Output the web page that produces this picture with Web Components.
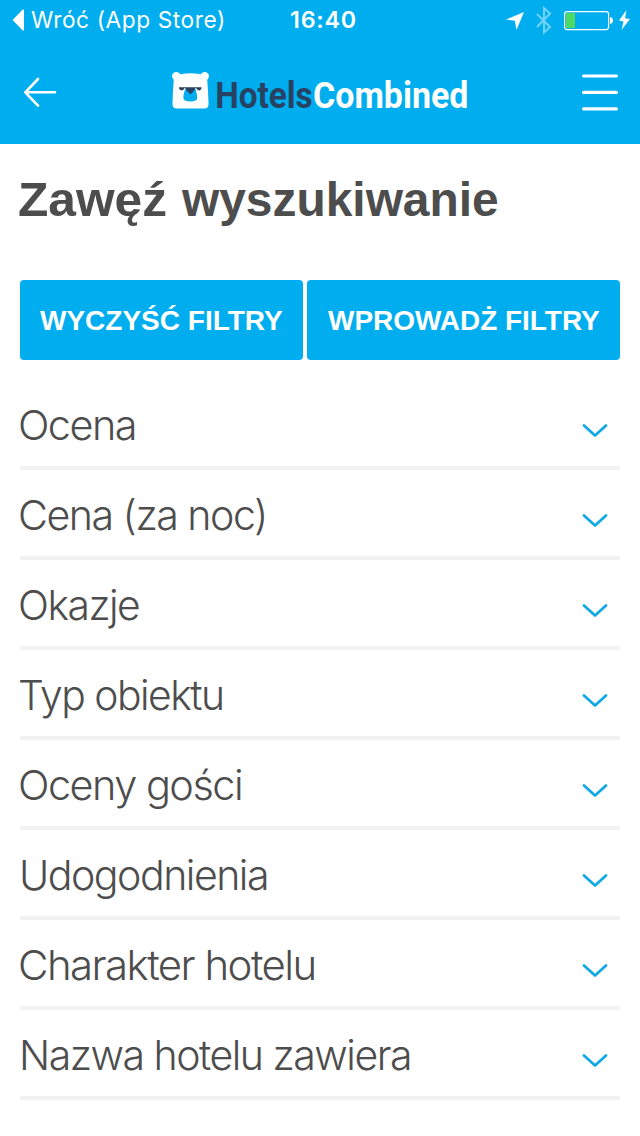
<!DOCTYPE html>
<html lang="pl">
<head>
<meta charset="utf-8">
<title>HotelsCombined</title>
<style>
body{margin:0;background:#fff;font-family:"Liberation Sans",Arial,sans-serif;color:#4d4d4d;font-optical-sizing:none}
</style>
</head>
<body>
<hotel-app></hotel-app>
<script>
const define = (name, html, setup) => customElements.define(name, class extends HTMLElement {
  connectedCallback() {
    if (this.shadowRoot) return;
    this.attachShadow({mode: 'open'}).innerHTML = html;
    if (setup) setup(this, this.shadowRoot);
  }
});
const ctx = document.createElement('canvas').getContext('2d');

// A single-line label whose glyphs span exactly the given width.
define('fit-text', `<style>
  :host{display:block;white-space:nowrap;flex:none}
  span{display:inline-block;transform-origin:0 50%}
</style><span><slot></slot></span>`, (el, root) => {
  const target = +el.getAttribute('w');
  const cs = getComputedStyle(el);
  ctx.font = `${cs.fontWeight} ${cs.fontSize} ${cs.fontFamily}`;
  ctx.letterSpacing = cs.letterSpacing === 'normal' ? '0px' : cs.letterSpacing;
  const m = ctx.measureText(el.textContent);
  const span = root.querySelector('span');
  const ratio = span.getBoundingClientRect().width / m.width;
  const k = target / ((m.actualBoundingBoxLeft + m.actualBoundingBoxRight) * ratio);
  el.style.width = target + 'px';
  span.style.transform = `translateX(${m.actualBoundingBoxLeft * k}px) scaleX(${k})`;
});

define('status-bar', `<style>
  :host{display:grid;grid-template-columns:290px 1fr auto;align-items:center;height:40px;padding:0 9px 0 12px;box-sizing:border-box;color:#fff;font-family:Inter,sans-serif;font-size:23px;line-height:40px}
  .back{display:flex;align-items:center;gap:7px;letter-spacing:.6px}
  .time{font-weight:600;margin-left:-11px;letter-spacing:.8px}
  svg{display:block}
</style>
<div class="back"><svg width="12" height="22" viewBox="0 0 12 22"><path d="M.5 11 10.500 .8Q12 0 12 1.500V20.500Q12 22 10.500 21.200Z" fill="#fff"/></svg><fit-text w="192">Wróć (App Store)</fit-text></div>
<fit-text class="time" w="65">16:40</fit-text>
<svg width="126" height="40" viewBox="505 0 126 40">
  <path d="M524 12 516.500 30 514.800 20.800 506 19.500Z" fill="#fff"/>
  <path d="M537 14 550 27 544 32.500V8L550 13.500 537 27" fill="none" stroke="#71d3fa" stroke-width="2"/>
  <rect x="564.600" y="11.600" width="44" height="18" rx="2.500" fill="none" stroke="#fff" stroke-width="1.200"/>
  <path d="M566 13h9v15h-9z" fill="#4cd964"/>
  <path d="M610 17q3 .6 3 3.500t-3 3.500z" fill="#fff"/>
  <path d="M626.500 10 619 20.500 623.500 21.400 621.500 30 630 18.900 625 18.300Z" fill="#fff"/>
</svg>`);

define('bear-logo', `<style>
  :host{display:flex;align-items:flex-start;font:700 36.5px/42px Roboto,sans-serif;color:#fff}
  svg{display:block;flex:none;margin:1px 8px 0 0}
  fit-text{margin-top:4px}
  .h{color:#274263;margin-right:2px}
</style>
<svg width="37" height="38" viewBox="0 0 37 38">
  <circle cx="4.300" cy="4.300" r="4.200" fill="#fff"/><circle cx="32.700" cy="4.300" r="4.200" fill="#fff"/>
  <path d="M4.500 3Q18.500-.5 32.500 3Q35 5 35.300 9 36.300 20 36.500 32 36.600 36.400 32.300 36.400H4.700Q.4 36.400.5 32 .7 20 1.700 9 2 5 4.500 3Z" fill="#fff"/>
  <path d="M13.300 17Q11 23 11.500 27Q12.500 29.400 18.500 29.400T25 27Q25.500 23 23.500 17Z" fill="#00aeef"/>
  <path d="M7 15.200H29.500V16.200Q29 18.500 27 18.500 25 18.300 24.300 16.300H23.200Q23 18.500 18.500 22.300 13.800 18.500 13.500 16.300H12.300Q11.500 18.500 9.700 18.500 7.500 18.300 7 16.200Z" fill="#274263"/>
</svg>
<fit-text class="h" w="95">Hotels</fit-text><fit-text w="153">Combined</fit-text>`);

define('nav-bar', `<style>
  :host{display:flex;align-items:flex-start;height:104px;padding:31px 22px 0 23px;box-sizing:border-box}
  .arrow{margin:6px 115px 0 0}
  .menu{margin:2px 0 0 auto}
  svg{display:block;flex:none}
  path{fill:none;stroke:#fff;stroke-linecap:round;stroke-linejoin:round}
</style>
<svg class="arrow" width="34" height="31" viewBox="0 0 34 31"><path d="M15 2 2.300 15.300 15 28.700M2.300 15.300H32" stroke-width="2.600"/></svg>
<bear-logo></bear-logo>
<svg class="menu" width="36" height="40" viewBox="0 0 36 40"><path d="M1.600 3H34.400M1.600 19.400H34.400M1.600 35.800H34.400" stroke-width="3.200"/></svg>`);

define('action-button', `<style>
  :host{display:flex;align-items:center;justify-content:center;background:#00aeef;color:#fff;border-radius:4px;height:80px;font-size:28px;font-weight:700;line-height:78px;padding-top:2px;box-sizing:border-box}
</style><slot></slot>`);

define('filter-row', `<style>
  :host{display:flex;align-items:center;justify-content:space-between;height:90px;box-sizing:border-box;padding-top:4px;border-bottom:4px solid #f2f2f2;font:300 41px/60px Inter,sans-serif;font-optical-sizing:none;letter-spacing:-1.5px;color:#4d4d4d}
  :host([stem]){padding-left:2px}
  svg{display:block;margin:11px 12px 0 0}
</style><slot></slot>
<svg width="26" height="16" viewBox="0 0 26 16"><path d="M2 2.500 13 12.500 24 2.500" fill="none" stroke="#10a9e6" stroke-width="2.800" stroke-linecap="round" stroke-linejoin="round"/></svg>`);

define('hotel-app', `<style>
  :host{display:block;height:1136px;overflow:hidden;background:#fff}
  header{background:#00aeef}
  main{padding:0 20px}
  h1{display:flex;gap:15px;margin:0 0 0 -1px;padding-top:26px;height:110px;font-size:48px;line-height:60px}
  .actions{display:grid;grid-template-columns:283px 313px;gap:4px;margin-bottom:20px}
</style>
<header><status-bar></status-bar><nav-bar></nav-bar></header>
<main>
  <h1><fit-text w="147">Zawęź</fit-text> <fit-text w="317">wyszukiwanie</fit-text></h1>
  <div class="actions">
    <action-button><fit-text w="243">WYCZYŚĆ FILTRY</fit-text></action-button>
    <action-button><fit-text w="272">WPROWADŻ FILTRY</fit-text></action-button>
  </div>
  <filter-row><fit-text w="115">Ocena</fit-text></filter-row>
  <filter-row><fit-text w="244">Cena (za noc)</fit-text></filter-row>
  <filter-row><fit-text w="119">Okazje</fit-text></filter-row>
  <filter-row><fit-text w="202">Typ obiektu</fit-text></filter-row>
  <filter-row><fit-text w="221">Oceny gości</fit-text></filter-row>
  <filter-row stem><fit-text w="245">Udogodnienia</fit-text></filter-row>
  <filter-row><fit-text w="294">Charakter hotelu</fit-text></filter-row>
  <filter-row stem><fit-text w="388">Nazwa hotelu zawiera</fit-text></filter-row>
</main>`);
</script>
</body>
</html>
